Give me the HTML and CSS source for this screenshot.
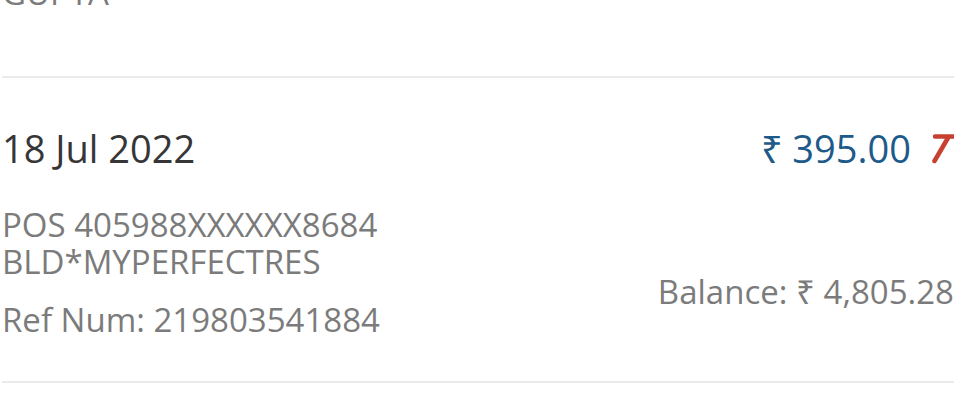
FILE: index.html
```html
<!DOCTYPE html>
<html>
<head>
<meta charset="utf-8">
<link rel="stylesheet" href="styles.css">
</head>
<body>
<div class="list">
  <div class="txn prev">
    <div class="desc">GUPTA</div>
  </div>
  <div class="txn">
    <div class="left">
      <div class="date">18 Jul 2022</div>
      <div class="desc">POS 405988XXXXXX8684<br>BLD*MYPERFECTRES</div>
      <div class="ref">Ref Num: 219803541884</div>
    </div>
    <div class="right">
      <div class="amount"><span>₹ 395.00</span>
        <svg class="arrow" width="40" height="50" viewBox="0 0 40 50"><path d="M3 13.5 H40 M16.5 14 L2.5 38" fill="none" stroke="#c8402f" stroke-width="4.5" stroke-linecap="round"/></svg>
      </div>
      <div class="balance">Balance: ₹ 4,805.28</div>
    </div>
  </div>
</div>
</body>
</html>
```
FILE: styles.css
```css
html, body {
  margin: 0;
  padding: 0;
  background: #fff;
  overflow: hidden;
}
body {
  font-family: "Open Sans", "Liberation Sans", sans-serif;
  width: 954px;
  height: 406px;
}
.list {
  width: 992px;
  padding-left: 2px;
}
.txn {
  display: flex;
  justify-content: space-between;
  border-bottom: 2px solid #ebebeb;
}
.prev {
  margin-top: -26px;
  height: 102px;
}
.txn + .txn {
  padding-top: 45px;
  height: 258px;
}
.left {
  display: flex;
  flex-direction: column;
}
.date {
  font-size: 38px;
  line-height: 50px;
  color: #363636;
}
.desc {
  font-size: 33px;
  line-height: 37px;
  color: #7b7b7b;
  margin-top: 33px;
  white-space: nowrap;
}
.prev .desc { margin-top: 0; }
.ref {
  font-size: 33px;
  line-height: 37px;
  color: #7b7b7b;
  margin-top: 21px;
  white-space: nowrap;
}
.right {
  display: flex;
  flex-direction: column;
  align-items: flex-end;
}
.amount {
  font-size: 38px;
  line-height: 50px;
  color: #1d5a8a;
  display: flex;
  align-items: flex-start;
  gap: 21px;
  margin-right: 22px;
  white-space: nowrap;
}
.arrow {
  display: block;
}
.balance {
  font-size: 33px;
  line-height: 37px;
  color: #7b7b7b;
  margin-top: 100px;
  margin-right: 40px;
  white-space: nowrap;
}
```
